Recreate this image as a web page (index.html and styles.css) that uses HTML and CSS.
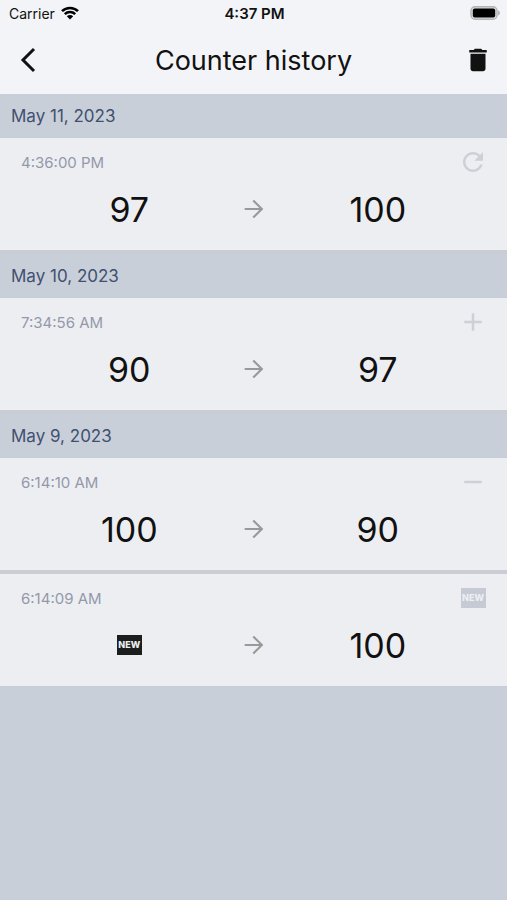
FILE: index.html
```html
<!DOCTYPE html>
<html lang="en">
<head>
  <meta charset="UTF-8">
  <meta name="viewport" content="width=device-width, initial-scale=1.0">
  <title>Counter history</title>
  <link rel="stylesheet" href="styles.css">
</head>
<body>
  <svg class="sprite" aria-hidden="true">
    <symbol id="arrow" viewBox="0 0 24 24">
      <path d="M12 4l-1.3 1.3 5.9 5.8H4v1.8h12.6l-5.9 5.8L12 20l8-8z"/>
    </symbol>
  </svg>
  <header>
    <div class="status-bar">
      <div class="carrier">
        <span>Carrier</span>
        <svg width="18" height="14" viewBox="0 0 18 14">
          <path d="M1 5.2a11.4 11.4 0 0 1 16 0M3.8 8.1a7.4 7.4 0 0 1 10.4 0" fill="none" stroke="#000" stroke-width="2.5"/>
          <path d="M9 13.6L5.8 10.3a4.6 4.6 0 0 1 6.4 0z"/>
        </svg>
      </div>
      <div class="clock">4:37 PM</div>
      <div class="battery">
        <svg width="30" height="14" viewBox="0 0 30 14">
          <rect x="1" y="0.8" width="26" height="12.4" rx="4" fill="#ddd" stroke="#b4b5b6" stroke-width="1.5"/>
          <rect x="2.8" y="2.6" width="22.4" height="8.8" rx="2"/>
          <path d="M28 4.6q2 .5 2 2.4t-2 2.4z" fill="#b4b5b6"/>
        </svg>
      </div>
    </div>
    <div class="title-bar">
      <button class="icon-btn" aria-label="Back">
        <svg width="18" height="26" viewBox="0 0 18 26">
          <path d="M14 2L3 13l11 11" fill="none" stroke="#111" stroke-width="3"/>
        </svg>
      </button>
      <h1>Counter history</h1>
      <button class="icon-btn" aria-label="Delete history">
        <svg width="30" height="30" viewBox="0 0 24 24" fill="#111">
          <path d="M6 19c0 1.1.9 2 2 2h8c1.1 0 2-.9 2-2V7H6v12zM19 4h-3.5l-1-1h-5l-1 1H5v2h14V4z"/>
        </svg>
      </button>
    </div>
  </header>
  <main>
    <section>
      <h2>May 11, 2023</h2>
      <article class="entry">
        <div class="entry-top">
          <time>4:36:00 PM</time>
          <svg class="action" viewBox="0 0 24 24">
            <path d="M17.65 6.35C16.2 4.9 14.21 4 12 4c-4.42 0-7.99 3.58-7.99 8s3.57 8 7.99 8c3.73 0 6.84-2.55 7.73-6h-2.08c-.82 2.33-3.04 4-5.65 4-3.31 0-6-2.69-6-6s2.69-6 6-6c1.66 0 3.14.69 4.22 1.78L13 11h7V4l-2.35 2.35z"/>
          </svg>
        </div>
        <div class="change">
          <span class="value">97</span>
          <svg class="arrow"><use href="#arrow"/></svg>
          <span class="value">100</span>
        </div>
      </article>
    </section>
    <section>
      <h2>May 10, 2023</h2>
      <article class="entry">
        <div class="entry-top">
          <time>7:34:56 AM</time>
          <svg class="action" viewBox="0 0 24 24"><path d="M19 13h-6v6h-2v-6H5v-2h6V5h2v6h6v2z"/></svg>
        </div>
        <div class="change">
          <span class="value">90</span>
          <svg class="arrow"><use href="#arrow"/></svg>
          <span class="value">97</span>
        </div>
      </article>
    </section>
    <section>
      <h2>May 9, 2023</h2>
      <article class="entry">
        <div class="entry-top">
          <time>6:14:10 AM</time>
          <svg class="action" viewBox="0 0 24 24"><path d="M19 13H5v-2h14v2z"/></svg>
        </div>
        <div class="change">
          <span class="value">100</span>
          <svg class="arrow"><use href="#arrow"/></svg>
          <span class="value">90</span>
        </div>
      </article>
      <article class="entry">
        <div class="entry-top">
          <time>6:14:09 AM</time>
          <span class="action"><span class="new new-light">NEW</span></span>
        </div>
        <div class="change">
          <span class="value"><span class="new">NEW</span></span>
          <svg class="arrow"><use href="#arrow"/></svg>
          <span class="value">100</span>
        </div>
      </article>
    </section>
  </main>
</body>
</html>
```
FILE: styles.css
```css
* {
  box-sizing: border-box;
}
body {
  margin: 0;
  min-height: 100vh;
  font-family: Inter, "Liberation Sans", sans-serif;
  background-color: #c9cfd9;
  color: #111;
}
.sprite {
  position: absolute;
  width: 0;
  height: 0;
}
svg {
  display: block;
}
header {
  background: #f3f4f7;
}
.status-bar {
  display: grid;
  grid-template-columns: 1fr auto 1fr;
  align-items: center;
  height: 26px;
  padding: 0 7px 0 9px;
  font-size: 14px;
}
.carrier {
  display: flex;
  align-items: center;
  gap: 6px;
}
.clock {
  font-size: 15px;
  font-weight: 600;
}
.battery {
  justify-self: end;
}
.title-bar {
  display: grid;
  grid-template-columns: 30px 1fr 30px;
  align-items: center;
  height: 68px;
  padding: 0 14px;
}
h1 {
  margin: 0;
  font-size: 27px;
  font-weight: 400;
  text-align: center;
}
.icon-btn {
  display: flex;
  justify-content: center;
  padding: 0;
  border: none;
  background: none;
  cursor: pointer;
}
h2 {
  margin: 0;
  padding: 0 11px;
  font-size: 17px;
  font-weight: 400;
  line-height: 44px;
  color: #40506f;
}
.entry {
  padding: 9px 19px;
  background: #edeef2;
}
.entry + .entry,
section + section {
  border-top: 4px solid #cacdd3;
}
.entry-top {
  display: flex;
  justify-content: space-between;
  align-items: center;
  height: 30px;
}
time {
  padding-left: 2px;
  font-size: 15px;
  color: #9399aa;
}
.action {
  display: flex;
  justify-content: center;
  align-items: center;
  width: 30px;
  height: 30px;
  fill: #cdd0d7;
}
.change {
  display: grid;
  grid-template-columns: 1fr 28px 1fr;
  align-items: center;
  height: 64px;
}
.value {
  display: flex;
  justify-content: center;
  font-size: 34px;
  font-weight: 400;
}
.arrow {
  width: 28px;
  height: 28px;
  fill: #999;
}
.new {
  width: 25px;
  background: #1c1e1e;
  color: #edeef2;
  font-size: 9px;
  font-weight: 800;
  line-height: 20px;
  text-align: center;
}
.new-light {
  background: #c5cad4;
}
```
